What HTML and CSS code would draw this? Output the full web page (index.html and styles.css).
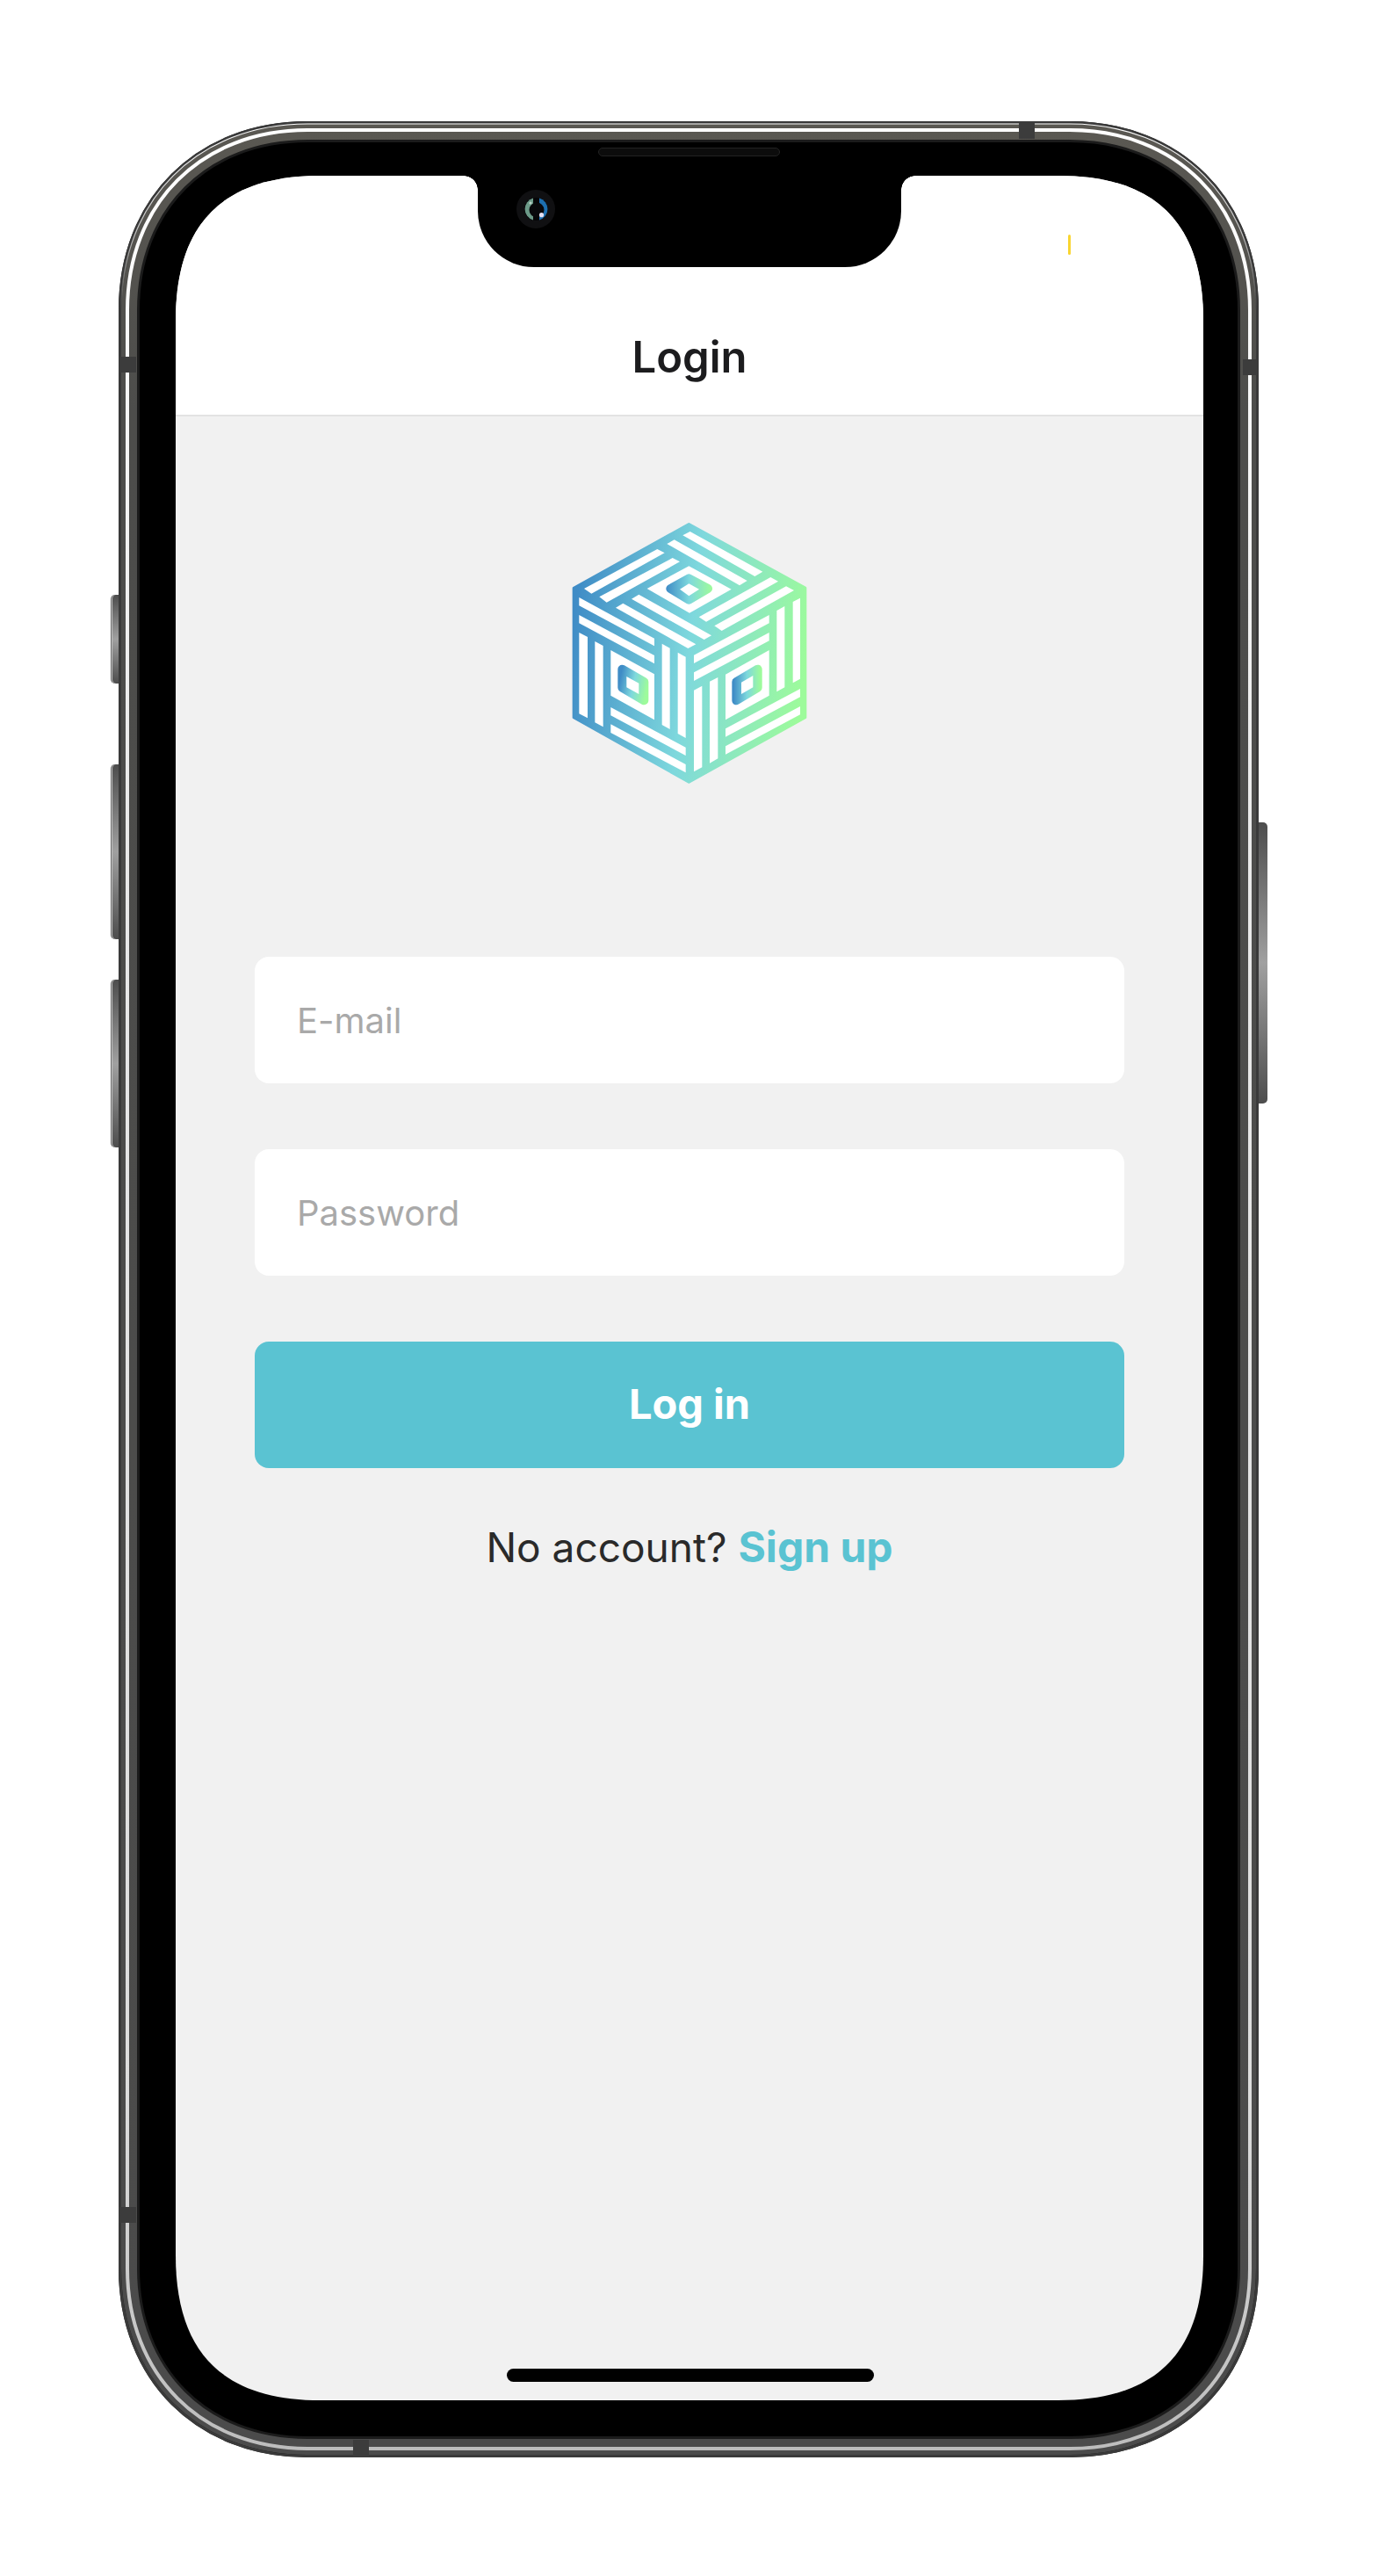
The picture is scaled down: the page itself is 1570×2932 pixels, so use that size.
FILE: index.html
```html
<!DOCTYPE html>
<html lang="en">
<head>
  <meta charset="UTF-8">
  <title>Login</title>
  <link rel="stylesheet" href="styles.css">
</head>
<body>

  <div class="device">
    <span class="side-btn btn-mute"></span>
    <span class="side-btn btn-up"></span>
    <span class="side-btn btn-down"></span>
    <span class="side-btn btn-power"></span>

    <!-- metal frame, same corner curve at each inset -->
    <svg class="frame" viewBox="0 0 1298 2659">
      <defs>
        <linearGradient id="metal" x1="0" y1="0" x2="0" y2="1">
          <stop offset="0" stop-color="#5a5852"/>
          <stop offset="0.12" stop-color="#4d4d4b"/>
          <stop offset="1" stop-color="#4b4b4b"/>
        </linearGradient>
        <linearGradient id="shine" x1="0" y1="0" x2="0" y2="1">
          <stop offset="0" stop-color="#ffffff"/>
          <stop offset="0.3" stop-color="#e9e9e9"/>
          <stop offset="0.85" stop-color="#dcdcdc"/>
          <stop offset="1" stop-color="#bdbdbd"/>
        </linearGradient>
        <linearGradient id="hairline" x1="0" y1="0" x2="0" y2="1">
          <stop offset="0" stop-color="#ffffff"/>
          <stop offset="0.6" stop-color="#ffffff" stop-opacity="0.7"/>
          <stop offset="1" stop-color="#ffffff" stop-opacity="0"/>
        </linearGradient>
      </defs>
      <path class="frame-base" d="M215 12H1083C1203 12 1286 95 1286 215V2444C1286 2564 1203 2647 1083 2647H215C95 2647 12 2564 12 2444V215C12 95 95 12 215 12Z"/>
      <path class="frame-metal" d="M215 12H1083C1203 12 1286 95 1286 215V2444C1286 2564 1203 2647 1083 2647H215C95 2647 12 2564 12 2444V215C12 95 95 12 215 12Z"/>
      <path class="frame-shine" d="M215 10H1083C1204 10 1288 94 1288 215V2444C1288 2565 1204 2649 1083 2649H215C94 2649 10 2565 10 2444V215C10 94 94 10 215 10Z"/>
      <path class="frame-edge" d="M215 1.5H1083C1208.8 1.5 1296.5 89.2 1296.5 215V2444C1296.5 2569.8 1208.8 2657.5 1083 2657.5H215C89.2 2657.5 1.5 2569.8 1.5 2444V215C1.5 89.2 89.2 1.5 215 1.5Z"/>
      <path class="frame-hair" d="M3 215C3 89.9 89.9 3 215 3H1083C1208.1 3 1295 89.9 1295 215"/>
    </svg>

    <div class="screen">
      <header class="top-bar">
        <h1>Login</h1>
      </header>

      <main class="content">
        <svg class="logo" viewBox="0 0 960 960" aria-label="Logo">
          <defs>
            <linearGradient id="cubeGrad" gradientUnits="userSpaceOnUse" x1="95" y1="400" x2="895" y2="500">
              <stop offset="0" stop-color="#3f8cc6"/>
              <stop offset="0.5" stop-color="#7ed8dd"/>
              <stop offset="1" stop-color="#9dfb9b"/>
            </linearGradient>
            <linearGradient id="topGrad" gradientUnits="userSpaceOnUse" x1="415" y1="270" x2="572" y2="270">
              <stop offset="0" stop-color="#3f8cc6"/>
              <stop offset="0.5" stop-color="#7ed8dd"/>
              <stop offset="1" stop-color="#9dfb9b"/>
            </linearGradient>
            <linearGradient id="leftGrad" gradientUnits="userSpaceOnUse" x1="255" y1="590" x2="350" y2="610">
              <stop offset="0" stop-color="#3f8cc6"/>
              <stop offset="0.5" stop-color="#7ed8dd"/>
              <stop offset="1" stop-color="#9dfb9b"/>
            </linearGradient>
            <linearGradient id="rightGrad" gradientUnits="userSpaceOnUse" x1="645" y1="600" x2="738" y2="600">
              <stop offset="0" stop-color="#3f8cc6"/>
              <stop offset="0.5" stop-color="#7ed8dd"/>
              <stop offset="1" stop-color="#9dfb9b"/>
            </linearGradient>
          </defs>
          <polygon class="cube" points="493,50 890,268 890,710 493,930 100,710 100,268"/>
          <g fill="#fff">
            <!-- top face -->
            <polygon points="135,270 385,135 410,148 160,287"/>
            <polygon points="187,298 437,165 462,178 212,317"/>
            <polygon points="472,88 497,75 745,212 718,228"/>
            <polygon points="418,117 443,103 692,243 666,259"/>
            <polygon points="527,367 772,231 798,245 552,383"/>
            <polygon points="580,397 825,262 852,276 605,414"/>
            <polygon points="297,305 322,290 570,430 545,444"/>
            <polygon points="243,335 268,320 517,460 490,474"/>
            <polygon points="350,270 493,193 638,272 495,353"/>
            <!-- left face -->
            <polygon points="118,300 375,440 375,466 118,328"/>
            <polygon points="118,360 375,498 375,526 118,388"/>
            <polygon points="118,420 147,435 147,712 118,697"/>
            <polygon points="172,450 200,465 200,742 172,727"/>
            <polygon points="226,480 375,562 375,718 226,635"/>
            <polygon points="401,458 428,473 428,750 401,735"/>
            <polygon points="455,488 482,503 482,780 455,765"/>
            <polygon points="226,675 482,812 482,840 226,703"/>
            <polygon points="226,733 482,870 482,898 226,762"/>
            <!-- right face -->
            <polygon points="510,497 767,360 767,388 510,525"/>
            <polygon points="510,556 767,420 767,448 510,585"/>
            <polygon points="848,315 873,302 873,578 848,592"/>
            <polygon points="793,345 820,330 820,607 793,622"/>
            <polygon points="618,563 767,480 767,635 618,718"/>
            <polygon points="510,617 538,602 538,880 510,895"/>
            <polygon points="564,587 592,573 592,850 564,866"/>
            <polygon points="618,748 873,612 873,640 618,776"/>
            <polygon points="618,808 873,672 873,700 618,836"/>
          </g>
          <path class="eye" d="M430 270L493 235L558 270L493 308Z" fill="url(#topGrad)" stroke="url(#topGrad)"/>
          <path class="eye" d="M265 545L340 588L340 652L265 608Z" fill="url(#leftGrad)" stroke="url(#leftGrad)"/>
          <path class="eye" d="M655 588L728 545L728 608L655 652Z" fill="url(#rightGrad)" stroke="url(#rightGrad)"/>
          <g fill="#fff">
            <polygon points="462,272 493,253 528,272 493,295"/>
            <polygon points="280,570 322,593 322,630 280,607"/>
            <polygon points="672,590 712,567 712,607 672,630"/>
          </g>
        </svg>

        <form class="login-form">
          <input class="field" type="text" placeholder="E-mail">
          <input class="field" type="password" placeholder="Password">
          <button class="submit" type="button">Log in</button>
          <p class="signup">No account? <a href="#">Sign up</a></p>
        </form>
      </main>

      <span class="home-bar"></span>
    </div>

    <div class="notch">
      <svg class="camera" viewBox="0 0 44 44">
        <circle cx="22" cy="22" r="22" fill="#101012"/>
        <circle cx="22" cy="22" r="13" fill="#060608"/>
        <path d="M19 9.5A13 13 0 0 0 19 34.5Z" fill="#6c9a88"/>
        <path d="M26 9.5A13 13 0 0 1 26 34.5Z" fill="#1d6fb0"/>
        <circle cx="23" cy="23" r="8.5" fill="#08080b"/>
        <circle cx="16" cy="15" r="1.6" fill="#b9d3c6"/>
        <circle cx="28.5" cy="28.7" r="2.6" fill="#e4e0f2"/>
      </svg>
    </div>
    <span class="speaker"></span>
    <span class="tick"></span>

    <span class="band band-top"></span>
    <span class="band band-bottom"></span>
    <span class="band band-left-a"></span>
    <span class="band band-left-b"></span>
    <span class="band band-right-a"></span>
  </div>

</body>
</html>
```

FILE: styles.css
```css
* {
  box-sizing: border-box;
}

body {
  margin: 0;
  background: #fff;
  font-family: Inter, "Liberation Sans", sans-serif;
}

.device {
  position: relative;
  width: 1298px;
  height: 2659px;
  margin: 138px 0 0 135px;
  padding: 62px 63px 65px 65px;
}

.frame {
  position: absolute;
  left: 0;
  top: 0;
  width: 100%;
  height: 100%;
}

.frame path {
  fill: none;
}

.frame .frame-base {
  fill: #000;
  stroke: #1b1b1b;
  stroke-width: 24;
}

.frame .frame-metal {
  stroke: url(#metal);
  stroke-width: 18;
}

.frame .frame-shine {
  stroke: url(#shine);
  stroke-width: 4;
}

.frame .frame-edge {
  stroke: #3a3a3a;
  stroke-width: 3;
}

.frame .frame-hair {
  stroke: url(#hairline);
  stroke-width: 1.2;
}

.screen {
  position: relative;
  display: flex;
  flex-direction: column;
  height: 100%;
  overflow: hidden;
  background: #f1f1f1;
  clip-path: path("M165 0H1005C1116 0 1170 54 1170 165V2367C1170 2478 1116 2532 1005 2532H165C54 2532 0 2478 0 2367V165C0 54 54 0 165 0Z");
}

.top-bar {
  flex: none;
  display: flex;
  align-items: flex-end;
  justify-content: center;
  height: 274px;
  padding-bottom: 36px;
  background: #fff;
  border-bottom: 2px solid #e3e3e3;
}

.top-bar h1 {
  margin: 0;
  font-size: 49px;
  font-weight: 600;
  color: #1c1c1e;
}

.content {
  flex: 1;
  display: flex;
  flex-direction: column;
  align-items: center;
  padding: 106px 90px 0;
}

.logo {
  flex: none;
  width: 320px;
  height: 320px;
  margin-left: -10px;
}

.cube {
  fill: url(#cubeGrad);
  stroke: url(#cubeGrad);
  stroke-width: 10;
  stroke-linejoin: round;
}

.eye {
  stroke-width: 30;
  stroke-linejoin: round;
}

.login-form {
  display: flex;
  flex-direction: column;
  width: 100%;
  margin-top: 189px;
}

.field,
.submit {
  width: 100%;
  height: 144px;
  margin-bottom: 75px;
  border: none;
  border-radius: 16px;
  outline: none;
  font-family: inherit;
}

.field {
  padding: 0 48px;
  background: #fff;
  font-size: 40px;
  color: #1c1c1e;
}

.field::placeholder {
  color: #a9a9a9;
}

.submit {
  margin-bottom: 0;
  padding-bottom: 4px;
  background: #5ac3d2;
  color: #fff;
  font-size: 47px;
  font-weight: 700;
}

.signup {
  margin: 60px 0 0;
  text-align: center;
  font-size: 46px;
  color: #2a2a2a;
}

.signup a {
  color: #5ac3d2;
  font-size: 48px;
  font-weight: 700;
  text-decoration: none;
}

.home-bar {
  position: absolute;
  left: 377px;
  bottom: 21px;
  width: 418px;
  height: 15px;
  border-radius: 8px;
  background: #000;
}

.notch {
  position: absolute;
  left: 409px;
  top: 62px;
  width: 482px;
  height: 104px;
  border-radius: 0 0 64px 64px;
  background: #000;
}

.notch::before,
.notch::after {
  content: "";
  position: absolute;
  top: 0;
  width: 16px;
  height: 16px;
}

.notch::before {
  left: -16px;
  background: radial-gradient(circle at 0 100%, transparent 15.5px, #000 16px);
}

.notch::after {
  right: -16px;
  background: radial-gradient(circle at 100% 100%, transparent 15.5px, #000 16px);
}

.camera {
  position: absolute;
  left: 44px;
  top: 16px;
  width: 44px;
  height: 44px;
}

.speaker {
  position: absolute;
  left: 546px;
  top: 30px;
  width: 207px;
  height: 10px;
  border-radius: 5px;
  border: 1px solid #222;
  background: #0c0c0c;
}

.tick {
  position: absolute;
  left: 1081px;
  top: 129px;
  width: 3px;
  height: 23px;
  border-radius: 2px;
  background: #f9d531;
}

.side-btn {
  position: absolute;
  width: 10px;
  background: linear-gradient(180deg, #4d4d4d, #a0a0a0 50%, #4d4d4d);
}

.btn-mute,
.btn-up,
.btn-down {
  left: -9px;
  border-left: 1px solid #666;
  border-radius: 5px 0 0 5px;
  box-shadow: inset 1px 0 0 #c4c4c4;
}

.btn-mute {
  top: 539px;
  height: 101px;
}

.btn-up {
  top: 732px;
  height: 199px;
}

.btn-down {
  top: 977px;
  height: 191px;
}

.btn-power {
  right: -10px;
  top: 798px;
  height: 320px;
  border-radius: 0 5px 5px 0;
}

/* antenna bands */
.band {
  position: absolute;
  background: #3c3c3c;
}

.band-top {
  left: 1025px;
  top: 0;
  width: 18px;
  height: 20px;
}

.band-bottom {
  left: 267px;
  bottom: 0;
  width: 18px;
  height: 20px;
}

.band-left-a {
  left: 0;
  top: 268px;
  width: 20px;
  height: 18px;
}

.band-left-b {
  left: 0;
  top: 2374px;
  width: 20px;
  height: 18px;
}

.band-right-a {
  right: 0;
  top: 271px;
  width: 18px;
  height: 18px;
}
```
